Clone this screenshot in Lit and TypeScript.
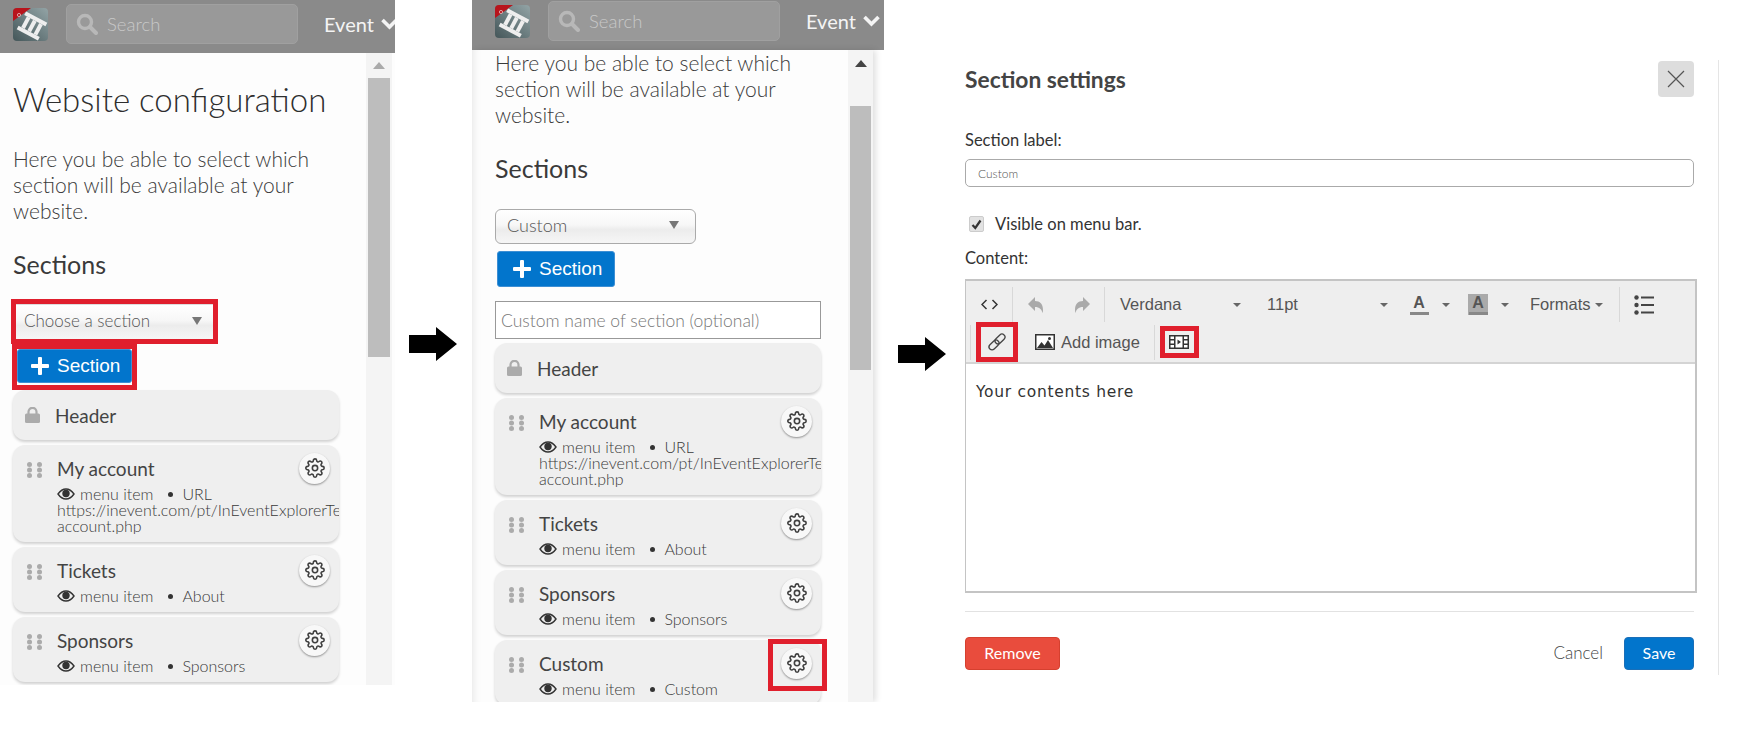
import { LitElement, html, css, svg } from "lit";
import { customElement, property } from "lit/decorators.js";

const gear = html`<svg class="gear-ico" viewBox="0 0 24 24" fill="none" stroke="#3f3f3f" stroke-width="1.9"><circle cx="12" cy="12" r="3.2"/><path d="M19.4 15a1.65 1.65 0 0 0 .33 1.82l.06.06a2 2 0 0 1 0 2.83 2 2 0 0 1-2.83 0l-.06-.06a1.65 1.65 0 0 0-1.82-.33 1.65 1.65 0 0 0-1 1.51V21a2 2 0 0 1-2 2 2 2 0 0 1-2-2v-.09A1.65 1.65 0 0 0 9 19.4a1.65 1.65 0 0 0-1.82.33l-.06.06a2 2 0 0 1-2.83 0 2 2 0 0 1 0-2.83l.06-.06a1.65 1.65 0 0 0 .33-1.82 1.65 1.65 0 0 0-1.51-1H3a2 2 0 0 1-2-2 2 2 0 0 1 2-2h.09A1.65 1.65 0 0 0 4.6 9a1.65 1.65 0 0 0-.33-1.82l-.06-.06a2 2 0 0 1 0-2.83 2 2 0 0 1 2.83 0l.06.06a1.65 1.65 0 0 0 1.82.33H9a1.65 1.65 0 0 0 1-1.51V3a2 2 0 0 1 2-2 2 2 0 0 1 2 2v.09a1.65 1.65 0 0 0 1 1.51 1.65 1.65 0 0 0 1.82-.33l.06-.06a2 2 0 0 1 2.83 0 2 2 0 0 1 0 2.83l-.06.06a1.65 1.65 0 0 0-.33 1.82V9a1.65 1.65 0 0 0 1.51 1H21a2 2 0 0 1 2 2 2 2 0 0 1-2 2h-.09a1.65 1.65 0 0 0-1.51 1z"/></svg>`;

const eye = html`<svg class="eye" viewBox="0 0 18 12"><path d="M1 6C3.5 2.4 6 1 9 1s5.500 1.400 8 5c-2.500 3.600-5 5-8 5S3.500 9.600 1 6z" fill="none" stroke="#333" stroke-width="1.400"/><circle cx="9" cy="5.500" r="3.700" fill="#333"/></svg>`;

const lock = html`<svg class="lock" viewBox="0 0 15 16"><path d="M3.500 7V4.800a4 4 0 0 1 8 0V7" fill="none" stroke="#ababab" stroke-width="2.200"/><rect y="6.500" width="15" height="9.500" rx="1.500" fill="#ababab"/></svg>`;

const dots = html`<svg class="dots" viewBox="0 0 15 16" fill="#ababab">${[2.5, 8, 13.5].map(
  (y) => svg`<circle cx="2.500" cy=${y} r="2.500"/><circle cx="12.500" cy=${y} r="2.500"/>`
)}</svg>`;

const logo = html`<svg class="logo" viewBox="0 0 35 33">
  <defs><linearGradient id="lg" x1="1" y1="0" x2="0" y2="1"><stop offset="0" stop-color="#93a4a6"/><stop offset="1" stop-color="#445659"/></linearGradient></defs>
  <rect width="35" height="33" rx="4" fill="url(#lg)"/>
  <path d="M0 13V4a4 4 0 0 1 4-4H18z" fill="#b8141c"/>
  <circle cx="6" cy="7" r="1.600" fill="none" stroke="#e8c0c0" stroke-width=".8"/>
  <g transform="rotate(28 19 18)" fill="#eee">
    <rect x="7" y="8" width="24" height="4"/>
    <rect x="7" y="24" width="24" height="4"/>
    <rect x="10" y="12" width="4" height="12"/><rect x="17" y="12" width="4" height="12"/><rect x="24" y="12" width="4" height="12"/>
  </g>
</svg>`;

@customElement("top-bar")
class TopBar extends LitElement {
  static styles = css`
    :host { display: flex; align-items: flex-start; height: 53px; background: #8a8a8a; padding: 4px 0 0 13px; box-sizing: border-box; font-family: Lato, sans-serif; overflow: hidden; }
    :host([compact]) { height: 50px; padding: 1px 0 0 23px; }
    .logo { width: 35px; height: 33px; margin: 4px 18px 0 0; flex: none; }
    .search { width: 232px; height: 40px; flex: none; box-sizing: border-box; background: #999; border: 1px solid #a0a0a0; border-radius: 5px; display: flex; align-items: center; padding-left: 9px; color: #c8c8c8; font-size: 18.500px; font-weight: 300; }
    .search svg { width: 22px; height: 22px; margin-right: 9px; }
    .event { margin-left: 26px; margin-top: 8px; flex: none; font-size: 20px; color: #f4f4f4; line-height: 24px; display: flex; align-items: center; }
    .event svg { width: 17px; height: 12px; margin-left: 7px; flex: none; }
  `;
  render() {
    return html`${logo}
      <div class="search"><svg viewBox="0 0 22 22" fill="none" stroke="#b8b8b8"><circle cx="9" cy="9" r="6.500" stroke-width="3.400"/><path d="M14 14l6 6" stroke-width="4" stroke-linecap="round"/></svg>Search</div>
      <div class="event">Event<svg viewBox="0 0 17 12" fill="none" stroke="#f4f4f4" stroke-width="3.600"><path d="M1.500 2l7 7 7-7"/></svg></div>`;
  }
}

@customElement("section-card")
class SectionCard extends LitElement {
  @property() label = "";
  @property() type = "";
  @property() url = "";
  @property({ type: Boolean }) flagged = false;
  static styles = css`
    :host { display: block; flex: none; }
    .card { position: relative; background: #efefef; border-radius: 12px; box-shadow: 0 2px 3px rgba(0,0,0,.18); padding: 12px 0 8px 44px; font-family: Lato, sans-serif; color: #444; }
    .dots { position: absolute; left: 14px; top: 17px; width: 15px; height: 16px; }
    .title { font-size: 19px; line-height: 24px; margin-bottom: 5px; }
    .sub { font-size: 16px; font-weight: 300; line-height: 16px; display: flex; align-items: center; color: #3a3a3a; }
    .eye { width: 18px; height: 12px; margin-right: 5px; }
    .bullet { width: 5px; height: 5px; background: #333; border-radius: 50%; margin: 0 9px 0 15px; }
    .url { font-size: 16px; font-weight: 300; line-height: 16px; white-space: nowrap; overflow: hidden; color: #3a3a3a; }
    .gear { position: absolute; top: 8px; right: 9px; width: 31px; height: 31px; border-radius: 50%; background: #f8f8f8; box-shadow: 0 1px 2px rgba(0,0,0,.4); display: flex; align-items: center; justify-content: center; }
    .gear-ico { width: 20px; height: 20px; margin-top: -2px; }
    .flag { position: absolute; top: -1px; right: -6px; width: 59px; height: 52px; box-sizing: border-box; border: 5px solid #e01f2d; }
  `;
  render() {
    return html`<div class="card">
      ${dots}
      <div class="title">${this.label}</div>
      <div class="sub">${eye}menu item<span class="bullet"></span>${this.type}</div>
      ${this.url ? html`<div class="url">${this.url}</div><div class="url">account.php</div>` : ""}
      <div class="gear">${gear}</div>
      ${this.flagged ? html`<div class="flag"></div>` : ""}
    </div>`;
  }
}

const panelStyles = css`
  :host { display: block; flex: none; font-family: Lato, sans-serif; }
  .panel { overflow: hidden; display: flex; flex-direction: column; }
  .body { flex: 1; min-height: 0; display: flex; background: #fdfdfd; }
  .main { flex: 1; min-width: 0; color: #444; }
  h1 { font-weight: 300; font-size: 33px; line-height: 40px; margin: 0 0 27px; color: #2e2e2e; }
  p { font-weight: 300; font-size: 21px; line-height: 26px; margin: 0 0 26px; color: #3a3a3a; }
  h3 { font-weight: 400; font-size: 25px; line-height: 28px; padding-bottom: 2px; margin: 0; color: #3a3a3a; }
  .select { box-sizing: border-box; display: flex; align-items: center; justify-content: space-between; background: linear-gradient(#fff 0, #f7f7f7 45%, #ececec 60%, #f6f6f6 100%); font-size: 18px; font-weight: 300; color: #555; padding: 0 11px 3px 8px; }
  .select i { border: 5px solid transparent; border-top: 8px solid #777; border-bottom: 0; }
  .btn { box-sizing: border-box; background: #0275cc; color: #fff; border-radius: 3px; border: 1px solid #3d8fd4; font-family: "Liberation Sans", Arial, sans-serif; font-size: 19px; display: flex; align-items: center; }
  .btn svg { width: 18px; height: 18px; margin-right: 8px; }
  .redbox { border: 5px solid #e01f2d; box-sizing: border-box; display: block; }
  .cards { display: flex; flex-direction: column; gap: 5px; width: 326px; }
  .hdr { height: 50px; background: #efefef; border-radius: 12px; box-shadow: 0 2px 3px rgba(0,0,0,.18); display: flex; align-items: center; padding-left: 12px; font-size: 19px; color: #444; flex: none; }
  .lock { width: 15px; height: 16px; margin-right: 15px; }
  .scroll { width: 26px; background: #f4f4f4; flex: none; display: flex; flex-direction: column; align-items: center; }
  .scroll i { border: 6px solid transparent; border-bottom: 7px solid #aaa; border-top: 0; margin-top: 9px; flex: none; }
  .thumb { width: 22px; background: #bdbdbd; flex: none; }
  .input { box-sizing: border-box; width: 326px; height: 38px; border: 1px solid #999; background: #fff; font-size: 17.500px; font-weight: 300; color: #777; display: flex; align-items: center; padding-left: 5px; margin: 14px 0 4px; }
`;
const plus = html`<svg viewBox="0 0 18 18" fill="#fff"><rect x="7" y="0" width="4" height="18" rx="1"/><rect x="0" y="7" width="18" height="4" rx="1"/></svg>`;
const URL_LINE = "https://inevent.com/pt/InEventExplorerTest/my-";

@customElement("config-first")
class ConfigFirst extends LitElement {
  static styles = [panelStyles, css`
    .panel { width: 395px; height: 685px; }
    .main { padding: 0 0 0 13px; }
    .intro { padding-top: 26px; }
    .sel-box { width: 207px; height: 45px; margin: 19px 0 0 -2px; }
    .sel-box .select { width: 197px; height: 35px; border-top: 1px solid #ddd; font-size: 17px; }
    .btn-box { width: 125px; height: 46px; margin-left: -1px; padding-bottom: 1px; }
    .btn-box .btn { width: 115px; height: 34px; padding-left: 13px; }
    .scroll { margin-right: 3px; }
    .thumb { height: 279px; margin-top: 9px; }
  `];
  render() {
    return html`<div class="panel">
      <top-bar></top-bar>
      <div class="body">
        <div class="main">
          <div class="intro">
            <h1>Website configuration</h1>
            <p>Here you be able to select which<br />section will be available at your<br />website.</p>
            <h3>Sections</h3>
          </div>
          <div class="redbox sel-box"><div class="select">Choose a section<i></i></div></div>
          <div class="redbox btn-box"><div class="btn">${plus}Section</div></div>
          <div class="cards">
            <div class="hdr">${lock}Header</div>
            <section-card label="My account" type="URL" url=${URL_LINE}></section-card>
            <section-card label="Tickets" type="About"></section-card>
            <section-card label="Sponsors" type="Sponsors"></section-card>
          </div>
        </div>
        <div class="scroll"><i></i><div class="thumb"></div></div>
      </div>
    </div>`;
  }
}

@customElement("config-second")
class ConfigSecond extends LitElement {
  static styles = [panelStyles, css`
    .panel { width: 412px; height: 702px; }
    .body { margin-right: 11px; box-shadow: 3px 0 6px rgba(0,0,0,.12), inset 9px 0 8px -8px rgba(0,0,0,.1); }
    .main { padding-left: 23px; }
    .select { width: 201px; height: 35px; margin-top: 25px; border: 1px solid #aaa; border-radius: 6px; padding-left: 11px; padding-right: 16px; }
    .btn { width: 118px; height: 36px; margin: 7px 0 0 2px; padding-left: 15px; }
    .scroll { width: 25px; }
    .scroll i { border-bottom-color: #444; margin-top: 10px; }
    .thumb { width: 21px; height: 264px; margin-top: 39px; }
  `];
  render() {
    return html`<div class="panel">
      <top-bar compact></top-bar>
      <div class="body">
        <div class="main">
          <p>Here you be able to select which<br />section will be available at your<br />website.</p>
          <h3>Sections</h3>
          <div class="select">Custom<i></i></div>
          <div class="btn">${plus}Section</div>
          <div class="input">Custom name of section (optional)</div>
          <div class="cards">
            <div class="hdr">${lock}Header</div>
            <section-card label="My account" type="URL" url=${URL_LINE}></section-card>
            <section-card label="Tickets" type="About"></section-card>
            <section-card label="Sponsors" type="Sponsors"></section-card>
            <section-card label="Custom" type="Custom" flagged></section-card>
          </div>
        </div>
        <div class="scroll"><i></i><div class="thumb"></div></div>
      </div>
    </div>`;
  }
}

@customElement("rich-editor")
class RichEditor extends LitElement {
  static styles = css`
    :host { display: block; margin-right: -3px; }
    .ed { height: 314px; box-sizing: border-box; border: 2px solid #c4c4c4; border-left-width: 1px; background: #fff; display: flex; flex-direction: column; }
    .tb { height: 83px; flex: none; background: #eee; border-bottom: 2px solid #d4d4d4; box-sizing: border-box; font-family: "Liberation Sans", Arial, sans-serif; font-size: 16.500px; color: #555; }
    .r1, .r2 { display: flex; align-items: center; }
    .r1 { height: 41px; }
    .r2 { height: 40px; }
    .c { height: 35px; margin-top: 6px; display: flex; align-items: center; justify-content: center; box-sizing: border-box; flex: none; }
    .sep { border-right: 1px solid #d8d8d8; }
    .c-code { width: 47px; }
    .c-undo { width: 46px; }
    .c-redo { width: 46px; }
    .c-font { width: 162px; justify-content: space-between; padding: 0 26px 0 15px; }
    .c-size { width: 134px; justify-content: space-between; padding-right: 13px; }
    .c-a { width: 36px; }
    .c-car { width: 18px; }
    .c-abox { width: 46px; }
    .c-car2 { width: 8px; }
    .c-fmt { width: 111px; justify-content: flex-start; padding-left: 21px; }
    .c-fmt b { margin-left: 4px; }
    .c-list { width: 48px; }
    b { display: block; border: 4px solid transparent; border-top: 4px solid #666; border-bottom: 0; font-size: 0; }
    .r2 .lsep { height: 35px; margin-left: 4px; border-left: 1px solid #d8d8d8; width: 5px; }
    .red { border: 5px solid #e01f2d; box-sizing: border-box; display: flex; align-items: center; justify-content: center; }
    .red-link { width: 42px; height: 40px; }
    .red-film { width: 39px; height: 32px; margin-left: 5px; }
    .img { display: flex; align-items: center; gap: 6px; margin-left: 17px; padding-right: 14px; height: 35px; border-right: 1px solid #d8d8d8; }
    .a { width: 20px; height: 21px; display: flex; flex-direction: column; align-items: center; font-weight: 700; font-size: 16px; line-height: 17px; color: #555; }
    .a span { width: 19px; height: 3px; background: #888; margin-top: 1px; flex: none; }
    .a.fill { background: #aaa; }
    .text { padding: 18px 0 0 10px; font-family: "DejaVu Sans", Verdana, sans-serif; font-size: 15.500px; letter-spacing: .7px; line-height: 20px; color: #333; }
  `;
  render() {
    return html`<div class="ed">
      <div class="tb">
        <div class="r1">
          <div class="c c-code sep"><svg width="17" height="11" viewBox="0 0 17 11" fill="none" stroke="#333" stroke-width="1.500"><path d="M5.500 1L1 5.500l4.500 4.500M11.500 1l4.500 4.500-4.500 4.500"/></svg></div>
          <div class="c c-undo"><svg width="16" height="16" viewBox="0 0 16 16" fill="#aaa"><path d="M7 0v4c5 0 8 3 8 9 0 2-.5 3-.5 3-.8-3.500-3-6-7.500-6v4L0 7z"/></svg></div>
          <div class="c c-redo sep"><svg width="16" height="16" viewBox="0 0 16 16" fill="#aaa"><path d="M9 0v4C4 4 1 7 1 13c0 2 .5 3 .5 3C2.300 12.500 4.500 10 9 10v4l7-7z"/></svg></div>
          <div class="c c-font">Verdana<b></b></div>
          <div class="c c-size">11pt<b></b></div>
          <div class="c c-a"><div class="a">A<span></span></div></div>
          <div class="c c-car"><b></b></div>
          <div class="c c-abox"><div class="a fill">A<span></span></div></div>
          <div class="c c-car2"><b></b></div>
          <div class="c c-fmt sep">Formats<b></b></div>
          <div class="c c-list"><svg width="20" height="20" viewBox="0 0 20 20" fill="#444"><circle cx="2.500" cy="2.500" r="2.200"/><circle cx="2.500" cy="10" r="2.200"/><circle cx="2.500" cy="17.500" r="2.200"/><rect x="7" y="1.500" width="13" height="2"/><rect x="7" y="9" width="13" height="2"/><rect x="7" y="16.500" width="13" height="2"/></svg></div>
        </div>
        <div class="r2">
          <div class="lsep"></div>
          <div class="red red-link"><svg width="20" height="20" viewBox="0 0 20 20" fill="none" stroke="#444" stroke-width="1.300"><g transform="rotate(-45 10 10)"><rect x="0" y="7" width="11.500" height="6" rx="3"/><rect x="8.500" y="7" width="11.500" height="6" rx="3"/></g></svg></div>
          <div class="img"><svg width="20" height="16" viewBox="0 0 20 16"><rect x=".75" y=".75" width="18.500" height="14.500" fill="#fff" stroke="#333" stroke-width="1.500"/><path d="M2 14l4.500-6 3 3.500 3.500-5.500 5 8z" fill="#333"/><circle cx="14.500" cy="4.500" r="1.500" fill="#333"/></svg>Add image</div>
          <div class="red red-film"><svg width="20" height="14" viewBox="0 0 20 14"><rect x=".75" y=".75" width="18.500" height="12.500" fill="#fff" stroke="#333" stroke-width="1.500"/><path d="M5 0h1.500v14H5zM13.500 0H15v14h-1.500zM0 4h5.500v1.500H0zM0 8.500h5.500V10H0zM14 4h6v1.500h-6zM14 8.500h6V10h-6z" fill="#333"/><path d="M8.500 4.500l3.500 2.500-3.500 2.500z" fill="#333"/></svg></div>
        </div>
      </div>
      <div class="text">Your contents here</div>
    </div>`;
  }
}

@customElement("section-settings")
class SectionSettings extends LitElement {
  static styles = css`
    :host { display: block; flex: none; margin-top: 60px; font-family: Lato, sans-serif; color: #333; }
    .wrap { width: 729px; height: 615px; padding-right: 24px; border-right: 1px solid #e5e5e5; }
    .head { display: flex; justify-content: space-between; align-items: center; height: 37px; }
    h2 { margin: 0; font-size: 22.800px; font-weight: 700; color: #444; }
    .close { width: 36px; height: 36px; background: #ddd; border-radius: 4px; display: flex; align-items: center; justify-content: center; }
    .label { font-size: 16.500px; line-height: 20px; color: #333; }
    .l1 { margin-top: 33px; }
    .field { box-sizing: border-box; height: 28px; border: 1px solid #aaa; border-radius: 5px; background: #fff; margin-top: 9px; font-size: 12px; font-weight: 300; color: #555; display: flex; align-items: center; padding-left: 12px; }
    .check { display: flex; align-items: center; gap: 11px; margin-top: 27px; height: 20px; font-size: 16.500px; font-weight: 400; color: #333; padding-left: 4px; }
    .box { width: 15px; height: 16px; border-radius: 2px; background: #e2e2e2; border: 1px solid #ccc; box-sizing: border-box; display: flex; align-items: center; justify-content: center; }
    .l2 { margin: 14px 0 11px; }
    hr { border: 0; border-top: 1px solid #e2e2e2; margin: 18px 0 0; }
    .foot { display: flex; align-items: center; margin-top: 25px; }
    .b { height: 33px; padding-bottom: 2px; box-sizing: border-box; border-radius: 4px; color: #fff; font-size: 16px; font-weight: 400; display: flex; align-items: center; justify-content: center; }
    .rm { width: 95px; background: #e94c3d; border: 1px solid #d5402f; }
    .cancel { margin-left: auto; margin-right: 21px; font-size: 17px; font-weight: 300; color: #444; padding-bottom: 2px; }
    .sv { width: 70px; background: #0275cc; border: 1px solid #1a6fb8; }
  `;
  render() {
    return html`<div class="wrap">
      <div class="head"><h2>Section settings</h2><div class="close"><svg width="18" height="18" viewBox="0 0 18 18" stroke="#555" stroke-width="1.200" fill="none"><path d="M1 1l16 16M17 1L1 17"/></svg></div></div>
      <div class="label l1">Section label:</div>
      <div class="field">Custom</div>
      <div class="check"><span class="box"><svg width="11" height="11" viewBox="0 0 11 11" fill="none" stroke="#333" stroke-width="2.200"><path d="M1.500 6l2.800 3L9.500 1.500"/></svg></span>Visible on menu bar.</div>
      <div class="label l2">Content:</div>
      <rich-editor></rich-editor>
      <hr />
      <div class="foot"><div class="b rm">Remove</div><span class="cancel">Cancel</span><div class="b sv">Save</div></div>
    </div>`;
  }
}

@customElement("app-root")
class AppRoot extends LitElement {
  static styles = css`
    :host { display: block; }
    .page { display: flex; width: 1752px; height: 738px; background: #fff; align-items: flex-start; overflow: hidden; }
    .arrow { flex: none; width: 48px; height: 34px; }
    .a1 { margin: 327px 15px 0 14px; }
    .a2 { margin: 337px 19px 0 14px; }
  `;
  render() {
    const arrow = (c: string) => html`<svg class="arrow ${c}" viewBox="0 0 48 34"><path d="M0 8h27V0l21 17-21 17v-8H0z" fill="#000"/></svg>`;
    return html`<div class="page">
      <config-first></config-first>
      ${arrow("a1")}
      <config-second></config-second>
      ${arrow("a2")}
      <section-settings></section-settings>
    </div>`;
  }
}
